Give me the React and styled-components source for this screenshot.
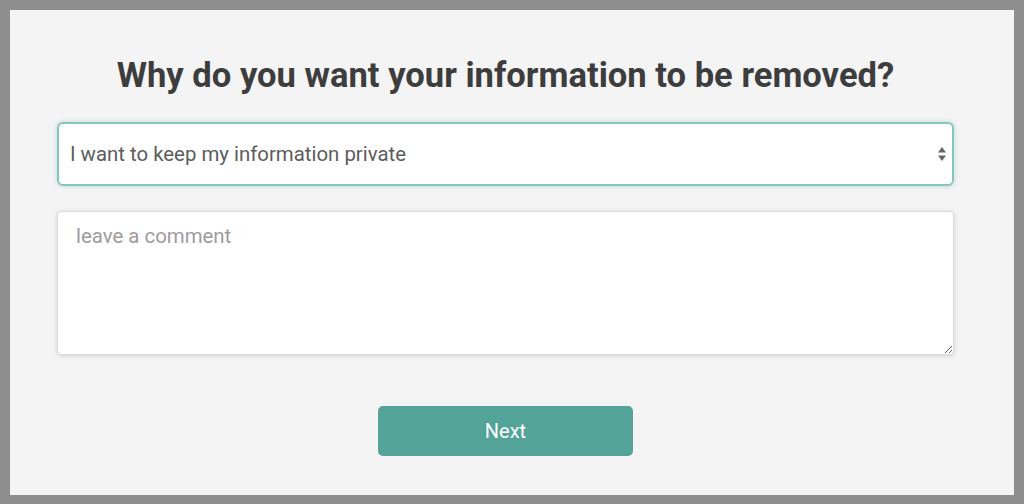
import { useState } from "react"
import { createGlobalStyle, styled } from "styled-components"

const GlobalStyle = createGlobalStyle`
  html, body {
    margin: 0;
    padding: 0;
  }
  body {
    background: #8e8e8e;
    font-family: Roboto, "Liberation Sans", Arial, sans-serif;
  }
`

const Frame = styled.div`
  box-sizing: border-box;
  width: 1024px;
  height: 504px;
  padding: 10px 10px 9px 10px;
`

const Panel = styled.div`
  box-sizing: border-box;
  height: 100%;
  background: #f4f4f4;
  padding: 43px 60px 0 47px;
  display: flex;
  flex-direction: column;
  align-items: stretch;
`

const Title = styled.h1`
  margin: 0 0 25px 0;
  text-align: center;
  font-size: 34.6px;
  font-weight: 700;
  color: #3d3d3d;
  line-height: 44px;
`

const SelectWrap = styled.div`
  position: relative;
`

const Select = styled.select`
  box-sizing: border-box;
  width: 100%;
  height: 64px;
  appearance: none;
  background: #fff;
  border: 2px solid #86c7bc;
  border-radius: 6px;
  box-shadow: 0 0 5px rgba(82, 163, 152, 0.35);
  padding: 0 40px 0 11px;
  font-family: inherit;
  font-size: 20.4px;
  color: #5c5c5c;
  outline: none;
`

const Arrows = styled.svg`
  position: absolute;
  right: 7px;
  top: 50%;
  transform: translateY(-50%);
  pointer-events: none;
`

const Comment = styled.textarea`
  box-sizing: border-box;
  width: 100%;
  height: 144px;
  margin-top: 25px;
  background: #fff;
  border: 1px solid #dcdcdc;
  border-radius: 4px;
  box-shadow: 0 1px 4px rgba(0, 0, 0, 0.15);
  padding: 12px 18px;
  font-family: inherit;
  font-size: 20.4px;
  color: #555;
  outline: none;

  &::placeholder {
    color: #9c9c9c;
  }
`

const Actions = styled.div`
  display: flex;
  justify-content: center;
  margin-top: 51px;
`

const NextButton = styled.button`
  width: 255px;
  height: 50px;
  border: none;
  border-radius: 5px;
  background: #53a399;
  color: #fff;
  font-family: inherit;
  font-size: 20px;
  cursor: pointer;
`

const reasons = [
  "I want to keep my information private",
  "My information is incorrect",
  "Other",
]

const App = () => {
  const [reason, setReason] = useState(reasons[0])
  const [comment, setComment] = useState("")

  return (
    <>
      <GlobalStyle />
      <Frame>
        <Panel>
          <Title>Why do you want your information to be removed?</Title>
          <SelectWrap>
            <Select value={reason} onChange={(e) => setReason(e.target.value)}>
              {reasons.map((r) => (
                <option key={r} value={r}>{r}</option>
              ))}
            </Select>
            <Arrows width="10" height="16" viewBox="0 0 10 16">
              <path d="M5 1 L9 6.5 H1 Z" fill="#666" />
              <path d="M5 15 L9 9.5 H1 Z" fill="#666" />
            </Arrows>
          </SelectWrap>
          <Comment
            placeholder="leave a comment"
            value={comment}
            onChange={(e) => setComment(e.target.value)}
          />
          <Actions>
            <NextButton>Next</NextButton>
          </Actions>
        </Panel>
      </Frame>
    </>
  )
}

export default App
